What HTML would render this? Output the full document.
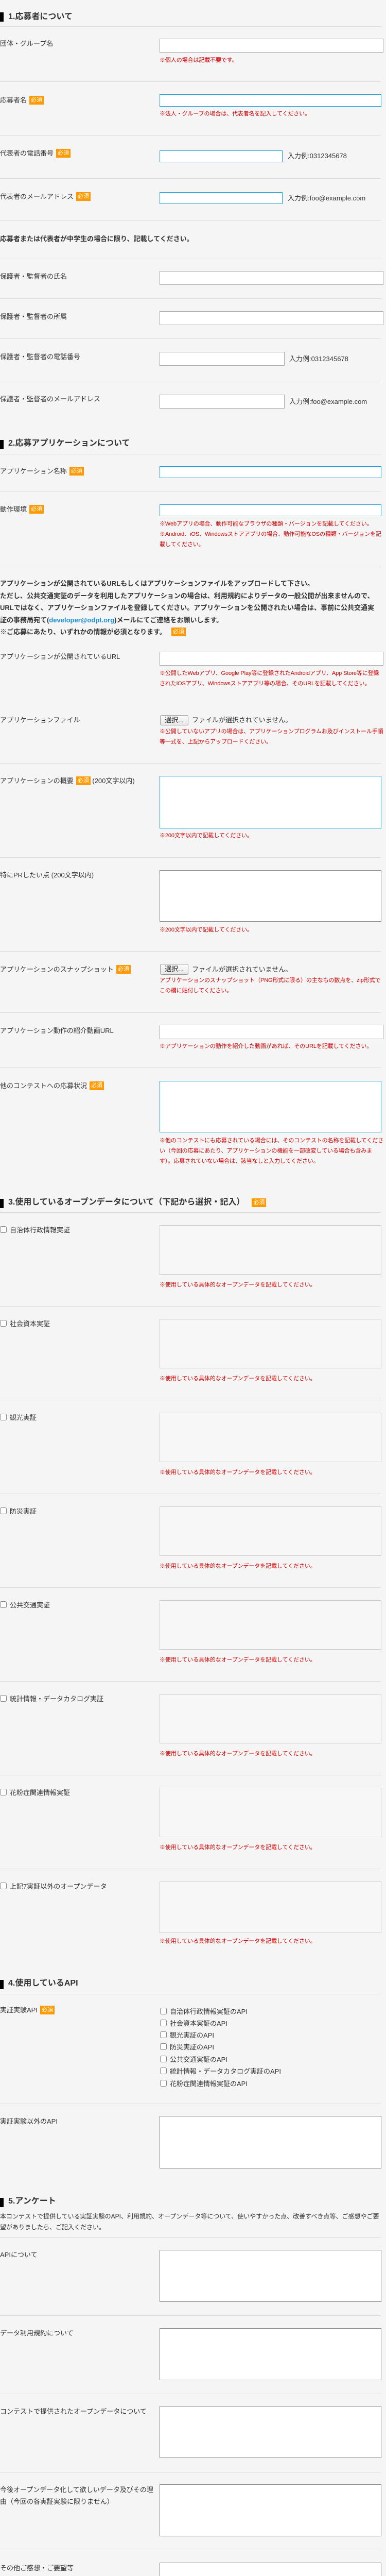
<!DOCTYPE html>
<html><head><meta charset="utf-8">
<style>
html{margin:0;padding:0;width:750px;height:5125px;overflow:hidden;background:#f5f5f5}
body{margin:0;padding:0;width:750px;height:5125px;background:#f5f5f5;position:relative;overflow:hidden;font-family:"Liberation Sans","Noto Sans CJK JP",sans-serif;color:#333}
.l{position:absolute;left:0;font-size:13px;line-height:18px;color:#333;white-space:nowrap}
.n{position:absolute;left:310px;width:436px;font-size:11px;letter-spacing:-0.1px;line-height:20px;color:#c00}
.hr{position:absolute;left:0;width:740px;height:1px;background:#dcdcdc}
.in{position:absolute;left:310px;width:435px;background:#fff;border:1px solid #aaa;box-sizing:border-box}
.b{border:1px solid #1a9fdb;width:431px}
.g3{background:#f7f7f7;border:1px solid #ccc;width:431px}
.ta{width:431px;border:1px solid #888}
.bd{display:inline-block;background:#f90;color:#fff;font-size:11px;line-height:17px;padding:0 3px;margin-left:5px;vertical-align:top;margin-top:0}
.bar{position:absolute;left:0;width:7px;height:18px;background:#000}
.h{position:absolute;left:16px;font-size:16px;line-height:20px;font-weight:bold;color:#333;white-space:nowrap}
.ex{position:absolute;font-size:13px;line-height:18px;color:#333;white-space:nowrap}
.cb{display:inline-block;width:11px;height:11px;border:1px solid #888;border-radius:3px;background:#fff;vertical-align:-1px;margin-right:6px}
.btn{position:absolute;left:311px;width:55px;height:20px;border:1px solid #999;border-radius:3px;background:linear-gradient(#fdfdfd,#e6e6e6);box-sizing:border-box;font-size:13px;line-height:18px;text-align:center;color:#222}
.bold{position:absolute;left:0;width:748px;font-size:13px;font-weight:bold;color:#333;white-space:nowrap;overflow:hidden}
.ck{position:absolute;left:311px;font-size:13px;line-height:18px;color:#333;white-space:nowrap}
</style></head><body>

<div class="bar" style="top:24px"></div><div class="h" style="top:23px">1.応募者について</div>
<div class="hr" style="top:51px"></div>
<div class="l" style="top:76px">団体・グループ名</div>
<div class="in" style="top:75px;height:27px"></div>
<div class="n" style="top:107px">※個人の場合は記載不要です。</div>
<div class="hr" style="top:158px"></div>
<div class="l" style="top:186px">応募者名<span class="bd">必須</span></div>
<div class="in b" style="top:183px;height:24px"></div>
<div class="n" style="top:211px">※法人・グループの場合は、代表者名を記入してください。</div>
<div class="hr" style="top:262px"></div>
<div class="l" style="top:289px">代表者の電話番号<span class="bd">必須</span></div>
<div class="in b" style="top:292px;height:23px;width:239px"></div>
<div class="ex" style="left:559px;top:294px">入力例:0312345678</div>
<div class="hr" style="top:346px"></div>
<div class="l" style="top:373px">代表者のメールアドレス<span class="bd">必須</span></div>
<div class="in b" style="top:373px;height:23px;width:239px"></div>
<div class="ex" style="left:559px;top:376px">入力例:foo@example.com</div>
<div class="hr" style="top:427px"></div>
<div class="bold" style="top:455px;line-height:18px">応募者または代表者が中学生の場合に限り、記載してください。</div>
<div class="hr" style="top:502px"></div>
<div class="l" style="top:528px">保護者・監督者の氏名</div>
<div class="in" style="top:526px;height:27px"></div>
<div class="hr" style="top:579px"></div>
<div class="l" style="top:606px">保護者・監督者の所属</div>
<div class="in" style="top:604px;height:27px"></div>
<div class="hr" style="top:657px"></div>
<div class="l" style="top:684px">保護者・監督者の電話番号</div>
<div class="in" style="top:683px;height:27px;width:243px"></div>
<div class="ex" style="left:562px;top:688px">入力例:0312345678</div>
<div class="hr" style="top:739px"></div>
<div class="l" style="top:766px">保護者・監督者のメールアドレス</div>
<div class="in" style="top:766px;height:27px;width:243px"></div>
<div class="ex" style="left:562px;top:771px">入力例:foo@example.com</div>

<div class="bar" style="top:854px"></div><div class="h" style="top:851px">2.応募アプリケーションについて</div>
<div class="hr" style="top:881px"></div>
<div class="l" style="top:906px">アプリケーション名称<span class="bd">必須</span></div>
<div class="in b" style="top:905px;height:23px"></div>
<div class="hr" style="top:954px"></div>
<div class="l" style="top:980px">動作環境<span class="bd">必須</span></div>
<div class="in b" style="top:979px;height:23px"></div>
<div class="n" style="top:1007px">※Webアプリの場合、動作可能なブラウザの種類・バージョンを記載してください。<br>※Android、iOS、Windowsストアアプリの場合、動作可能なOSの種類・バージョンを記載してください。</div>
<div class="hr" style="top:1098px"></div>
<div class="bold" style="top:1121px;line-height:23.5px">アプリケーションが公開されているURLもしくはアプリケーションファイルをアップロードして下さい。<br>ただし、公共交通実証のデータを利用したアプリケーションの場合は、利用規約によりデータの一般公開が出来ませんので、<br>URLではなく、アプリケーションファイルを登録してください。アプリケーションを公開されたい場合は、事前に公共交通実<br>証の事務局宛て(<span style="color:#1a8fd6">developer@odpt.org</span>)メールにてご連絡をお願いします。<br>※ご応募にあたり、いずれかの情報が必須となります。<span class="bd" style="margin-left:10px;margin-top:3px;font-weight:normal">必須</span></div>
<div class="l" style="top:1266px">アプリケーションが公開されているURL</div>
<div class="in" style="top:1265px;height:27px"></div>
<div class="n" style="top:1297px">※公開したWebアプリ、Google Play等に登録されたAndroidアプリ、App Store等に登録されたiOSアプリ、Windowsストアアプリ等の場合、そのURLを記載してください。</div>
<div class="l" style="top:1389px">アプリケーションファイル</div>
<div class="btn" style="top:1388px">選択...</div>
<div class="ex" style="left:373px;top:1389px">ファイルが選択されていません。</div>
<div class="n" style="top:1410px">※公開していないアプリの場合は、アプリケーションプログラムお及びインストール手順等一式を、上記からアップロードください。</div>
<div class="hr" style="top:1481px"></div>
<div class="l" style="top:1507px">アプリケーションの概要<span class="bd">必須</span> (200文字以内)</div>
<div class="in b" style="top:1506px;height:102px"></div>
<div class="n" style="top:1612px">※200文字以内で記載してください。</div>
<div class="hr" style="top:1664px"></div>
<div class="l" style="top:1690px">特にPRしたい点 (200文字以内)</div>
<div class="in ta" style="top:1689px;height:100px"></div>
<div class="n" style="top:1795px">※200文字以内で記載してください。</div>
<div class="hr" style="top:1846px"></div>
<div class="l" style="top:1873px">アプリケーションのスナップショット<span class="bd">必須</span></div>
<div class="btn" style="top:1871px;height:21px">選択...</div>
<div class="ex" style="left:373px;top:1873px">ファイルが選択されていません。</div>
<div class="n" style="top:1893px">アプリケーションのスナップショット（PNG形式に限る）の主なもの数点を、zip形式でこの欄に貼付してください。</div>
<div class="hr" style="top:1965px"></div>
<div class="l" style="top:1992px">アプリケーション動作の紹介動画URL</div>
<div class="in" style="top:1989px;height:28px"></div>
<div class="n" style="top:2021px">※アプリケーションの動作を紹介した動画があれば、そのURLを記載してください。</div>
<div class="hr" style="top:2072px"></div>
<div class="l" style="top:2099px">他のコンテストへの応募状況<span class="bd">必須</span></div>
<div class="in b" style="top:2098px;height:100px"></div>
<div class="n" style="top:2204px">※他のコンテストにも応募されている場合には、そのコンテストの名称を記載してください（今回の応募にあたり、アプリケーションの機能を一部改変している場合も含みます）。応募されていない場合は、該当なしと入力してください。</div>

<div class="bar" style="top:2327px"></div><div class="h" style="top:2324px">3.使用しているオープンデータについて（下記から選択・記入）<span class="bd" style="margin-left:14px;font-weight:normal;margin-top:2px">必須</span></div>
<div class="hr" style="top:2353px"></div>

<div class="l" style="top:2379px"><span class="cb"></span>自治体行政情報実証</div>
<div class="in g3" style="top:2378px;height:96px"></div>
<div class="n" style="top:2484px">※使用している具体的なオープンデータを記載してください。</div>
<div class="hr" style="top:2535px"></div>
<div class="l" style="top:2561px"><span class="cb"></span>社会資本実証</div>
<div class="in g3" style="top:2560px;height:96px"></div>
<div class="n" style="top:2666px">※使用している具体的なオープンデータを記載してください。</div>
<div class="hr" style="top:2717px"></div>
<div class="l" style="top:2743px"><span class="cb"></span>観光実証</div>
<div class="in g3" style="top:2742px;height:96px"></div>
<div class="n" style="top:2848px">※使用している具体的なオープンデータを記載してください。</div>
<div class="hr" style="top:2899px"></div>
<div class="l" style="top:2925px"><span class="cb"></span>防災実証</div>
<div class="in g3" style="top:2924px;height:96px"></div>
<div class="n" style="top:3030px">※使用している具体的なオープンデータを記載してください。</div>
<div class="hr" style="top:3081px"></div>
<div class="l" style="top:3107px"><span class="cb"></span>公共交通実証</div>
<div class="in g3" style="top:3106px;height:96px"></div>
<div class="n" style="top:3212px">※使用している具体的なオープンデータを記載してください。</div>
<div class="hr" style="top:3263px"></div>
<div class="l" style="top:3289px"><span class="cb"></span>統計情報・データカタログ実証</div>
<div class="in g3" style="top:3288px;height:96px"></div>
<div class="n" style="top:3394px">※使用している具体的なオープンデータを記載してください。</div>
<div class="hr" style="top:3445px"></div>
<div class="l" style="top:3471px"><span class="cb"></span>花粉症関連情報実証</div>
<div class="in g3" style="top:3470px;height:96px"></div>
<div class="n" style="top:3576px">※使用している具体的なオープンデータを記載してください。</div>
<div class="hr" style="top:3627px"></div>
<div class="l" style="top:3653px"><span class="cb"></span>上記7実証以外のオープンデータ</div>
<div class="in g3" style="top:3652px;height:100px"></div>
<div class="n" style="top:3758px">※使用している具体的なオープンデータを記載してください。</div>

<div class="bar" style="top:3843px"></div><div class="h" style="top:3840px">4.使用しているAPI</div>
<div class="hr" style="top:3870px"></div>
<div class="l" style="top:3893px">実証実験API<span class="bd">必須</span></div>
<div class="ck" style="top:3896px"><span class="cb"></span>自治体行政情報実証のAPI</div>
<div class="ck" style="top:3919px"><span class="cb"></span>社会資本実証のAPI</div>
<div class="ck" style="top:3942px"><span class="cb"></span>観光実証のAPI</div>
<div class="ck" style="top:3965px"><span class="cb"></span>防災実証のAPI</div>
<div class="ck" style="top:3989px"><span class="cb"></span>公共交通実証のAPI</div>
<div class="ck" style="top:4012px"><span class="cb"></span>統計情報・データカタログ実証のAPI</div>
<div class="ck" style="top:4036px"><span class="cb"></span>花粉症関連情報実証のAPI</div>
<div class="hr" style="top:4083px"></div>
<div class="l" style="top:4109px">実証実験以外のAPI</div>
<div class="in ta" style="top:4107px;height:102px"></div>

<div class="bar" style="top:4266px"></div><div class="h" style="top:4263px">5.アンケート</div>
<div style="position:absolute;left:0;top:4292px;width:745px;font-size:12px;line-height:21px;color:#333">本コンテストで提供している実証実験のAPI、利用規約、オープンデータ等について、使いやすかった点、改善すべき点等、ご感想やご要望がありましたら、ご記入ください。</div>
<div class="hr" style="top:4342px"></div>
<div class="l" style="top:4368px">APIについて</div>
<div class="in ta" style="top:4367px;height:101px"></div>
<div class="hr" style="top:4494px"></div>
<div class="l" style="top:4520px">データ利用規約について</div>
<div class="in ta" style="top:4519px;height:101px"></div>
<div class="hr" style="top:4646px"></div>
<div class="l" style="top:4672px">コンテストで提供されたオープンデータについて</div>
<div class="in ta" style="top:4670px;height:101px"></div>
<div class="hr" style="top:4798px"></div>
<div class="l" style="top:4821px;white-space:normal;width:300px;line-height:23px">今後オープンデータ化して欲しいデータ及びその理由（今回の各実証実験に限りません）</div>
<div class="in ta" style="top:4822px;height:101px"></div>
<div class="hr" style="top:4949px"></div>
<div class="l" style="top:4976px">その他ご感想・ご要望等</div>
<div class="in ta" style="top:4974px;height:101px"></div>
<div class="hr" style="top:5121px"></div>
</body></html>
